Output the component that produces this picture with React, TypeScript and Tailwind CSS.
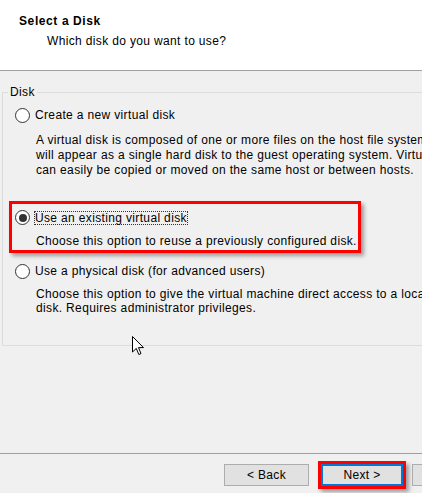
import React from "react";

function Radio({ checked }: { checked?: boolean }) {
  return (
    <span className="flex h-[15px] w-[15px] shrink-0 items-center justify-center rounded-full border border-[#333333] bg-white">
      {checked && <span className="h-[8px] w-[8px] rounded-full bg-[#333333]" />}
    </span>
  );
}

function Pointer() {
  return (
    <svg width="13" height="20" viewBox="0 0 13 20" className="absolute left-[132px] top-[336px]">
      <path
        d="M0.5 0.5 L0.5 16 L4.3 12.4 L6.8 18.5 L9 17.6 L6.5 11.6 L11.5 11.6 Z"
        fill="#ffffff"
        stroke="#000000"
        strokeWidth="1"
        strokeLinejoin="miter"
      />
    </svg>
  );
}

export default function App() {
  return (
    <div className="relative flex h-[493px] w-[422px] flex-col overflow-hidden bg-[#f0f0f0] font-['Liberation_Sans',Arial,sans-serif] text-[12px] leading-[15px] tracking-[0.35px] text-black">
      <div className="h-[71px] shrink-0 border-b border-[#a0a0a0] bg-white pl-[19px] pt-[14px]">
        <div className="font-bold tracking-[0.6px]">Select a Disk</div>
        <div className="mt-[5px] pl-[28px]">Which disk do you want to use?</div>
      </div>

      <div className="flex-1 pl-[2px] pt-[14px]">
        <fieldset className="h-[261px] w-[440px] border border-[#dcdcdc] pl-[5px]">
          <legend className="px-[2px] leading-[15px]">Disk</legend>

          <label className="ml-[7px] mt-[8px] flex h-[15px] items-center gap-[5px]">
            <Radio />
            <span>Create a new virtual disk</span>
          </label>
          <p className="mt-[10px] whitespace-nowrap pl-[28px]">
            A virtual disk is composed of one or more files on the host file system and
            <br />
            will appear as a single hard disk to the guest operating system. Virtual disks
            <br />
            can easily be copied or moved on the same host or between hosts.
          </p>

          <div className="ml-[1px] mt-[23px] h-[52px] w-[352px] border-[3px] border-[#ff0000] pl-[3px] pt-[6px] shadow-[3px_3px_4px_rgba(0,0,0,0.35)]">
            <label className="flex h-[15px] items-center gap-[4px]">
              <Radio checked />
              <span className="border border-dotted border-[#333333] leading-[12px]">
                Use an existing virtual disk
              </span>
            </label>
            <p className="mt-[9px] pl-[21px]">Choose this option to reuse a previously configured disk.</p>
          </div>

          <label className="ml-[7px] mt-[11px] flex h-[15px] items-center gap-[5px]">
            <Radio />
            <span>Use a physical disk (for advanced users)</span>
          </label>
          <p className="mt-[8px] whitespace-nowrap pl-[28px] leading-[14px]">
            Choose this option to give the virtual machine direct access to a local hard
            <br />
            disk. Requires administrator privileges.
          </p>
        </fieldset>
      </div>

      <div className="flex h-[40px] shrink-0 items-start border-t border-[#a0a0a0] pl-[224px] pt-[10px]">
        <button className="h-[22px] w-[85px] shrink-0 border border-[#adadad] bg-[#e1e1e1]">&lt; Back</button>
        <div className="-mt-[3px] ml-[9px] h-[28px] w-[88px] shrink-0 border-[3px] border-[#ff0000] shadow-[3px_3px_4px_rgba(0,0,0,0.35)]">
          <button className="h-full w-full border-2 border-[#0078d7] bg-[#e1e1e1]">Next &gt;</button>
        </div>
        <button className="ml-[6px] h-[22px] w-[85px] shrink-0 border border-[#adadad] bg-[#e1e1e1]">Cancel</button>
      </div>

      <Pointer />
    </div>
  );
}
